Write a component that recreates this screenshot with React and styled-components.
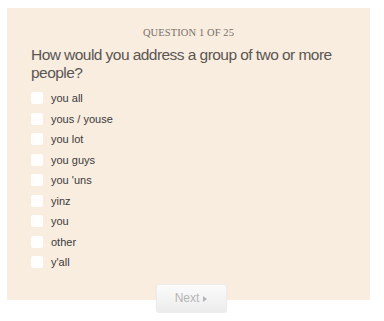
import React from "react";
import styled, { createGlobalStyle } from "styled-components";

const Global = createGlobalStyle`
  html, body { margin: 0; padding: 0; background: #ffffff; }
  body { font-family: "Liberation Sans", Arial, sans-serif; }
`;

const Page = styled.div`
  padding: 8px 0 0 7px;
  width: 384px;
  box-sizing: border-box;
`;

const Panel = styled.section`
  width: 363px;
  box-sizing: border-box;
  background: #f9ede0;
  padding: 18px 24px 27px 24px;
`;

const Label = styled.div`
  font-family: "Liberation Serif", "Times New Roman", serif;
  font-size: 10.5px;
  line-height: 14px;
  letter-spacing: 0.1px;
  color: #777068;
  text-align: center;
  text-transform: uppercase;
`;

const Question = styled.h2`
  margin: 6px 0 6px 0;
  font-family: "Liberation Sans", Arial, sans-serif;
  font-weight: normal;
  font-size: 15.5px;
  line-height: 18px;
  letter-spacing: -0.55px;
  color: #5a5653;
`;

const Options = styled.ul`
  list-style: none;
  margin: 0;
  padding: 0;
`;

const Row = styled.li`
  height: 20.5px;
  display: flex;
  align-items: center;
  gap: 8px;
`;

const Box = styled.span`
  width: 12px;
  height: 12px;
  border-radius: 2px;
  background: #ffffff;
  opacity: 0.9;
  flex: none;
`;

const OptionText = styled.span`
  font-size: 11px;
  letter-spacing: 0;
  color: #3a3a3a;
`;

const Footer = styled.div`
  display: flex;
  justify-content: center;
  width: 363px;
  padding-left: 5px;
  box-sizing: border-box;
  margin-top: -16px;
`;

const NextButton = styled.button`
  width: 71px;
  height: 29px;
  border: 1px solid #ececec;
  border-radius: 3px;
  background: linear-gradient(#fbfbfb, #ececec);
  box-shadow: 0 1px 2px rgba(0, 0, 0, 0.06);
  font-family: "Liberation Sans", Arial, sans-serif;
  font-size: 12px;
  color: #b5b5b5;
  display: flex;
  align-items: center;
  justify-content: center;
  gap: 4px;
  padding: 0;
`;

const Arrow = styled.span`
  width: 0;
  height: 0;
  border-top: 3px solid transparent;
  border-bottom: 3px solid transparent;
  border-left: 4px solid #b5b5b5;
  margin-top: 1px;
`;

const options = [
  "you all",
  "yous / youse",
  "you lot",
  "you guys",
  "you 'uns",
  "yinz",
  "you",
  "other",
  "y'all",
];

export default function App() {
  return (
    <Page>
      <Global />
      <Panel>
        <Label>Question 1 of 25</Label>
        <Question>How would you address a group of two or more people?</Question>
        <Options>
          {options.map((o) => (
            <Row key={o}>
              <Box />
              <OptionText>{o}</OptionText>
            </Row>
          ))}
        </Options>
      </Panel>
      <Footer>
        <NextButton>
          Next <Arrow />
        </NextButton>
      </Footer>
    </Page>
  );
}
